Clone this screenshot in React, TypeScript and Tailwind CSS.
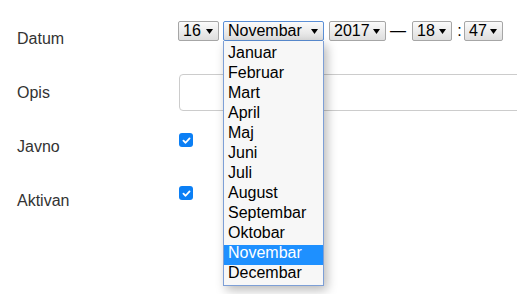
const months = [
  'Januar',
  'Februar',
  'Mart',
  'April',
  'Maj',
  'Juni',
  'Juli',
  'August',
  'Septembar',
  'Oktobar',
  'Novembar',
  'Decembar',
];

function Caret() {
  return (
    <svg className="h-[5px] w-[7px] flex-shrink-0" viewBox="0 0 7 5">
      <path d="M0 0h7L3.5 5z" fill="#000" />
    </svg>
  );
}

function FakeSelect({
  value,
  width,
  focused,
}: {
  value: string;
  width: string;
  focused?: boolean;
}) {
  return (
    <div
      className={`flex h-[20px] items-center justify-between rounded-[2px] border pl-[4px] pr-[5px] bg-gradient-to-b from-[#fbfbfb] to-[#dedede] ${width} ${
        focused ? 'border-[#5b8fd6]' : 'border-[#a6a6a6]'
      }`}
    >
      <span className="text-[16px] leading-none text-black">{value}</span>
      <Caret />
    </div>
  );
}

function Checkbox() {
  return (
    <span className="flex h-[14px] w-[14px] items-center justify-center rounded-[3px] bg-[#0b7ff5]">
      <svg className="h-[9px] w-[9px]" viewBox="0 0 10 10" fill="none">
        <path d="M1.6 5.2l2.4 2.3L8.4 2.6" stroke="#fff" strokeWidth={2} strokeLinecap="round" strokeLinejoin="round" />
      </svg>
    </span>
  );
}

export default function App() {
  return (
    <div className="relative h-[294px] w-[517px] overflow-hidden bg-white pt-[11px] font-['Liberation_Sans',Arial,sans-serif] text-[16px] text-[#333]">
      {/* Datum */}
      <div className="flex h-[54px]">
        <div className="flex w-[178px] shrink-0 items-center pl-[17px] pt-[1px]">Datum</div>
        <div className="mt-[10px] flex h-[20px] items-center">
          <FakeSelect value="16" width="w-[41px]" />
          <div className="relative ml-[4px]">
            <FakeSelect value="Novembar" width="w-[101px]" focused />
            {/* open month list */}
            <ul className="absolute left-0 top-[20px] z-10 w-[101px] border border-t-0 border-[#7d9fd6] bg-[#f7f7f7] pt-[4px] shadow-[3px_4px_10px_rgba(0,0,0,0.28)]">
              {months.map((m) => (
                <li
                  key={m}
                  className={`h-[20px] pl-[4px] text-[16px] leading-[16px] ${
                    m === 'Novembar' ? 'bg-[#1e90ff] text-white' : 'text-black'
                  }`}
                >
                  {m}
                </li>
              ))}
            </ul>
          </div>
          <div className="ml-[5px]">
            <FakeSelect value="2017" width="w-[57px]" />
          </div>
          <span className="ml-[4px] w-[15px] text-center text-black">—</span>
          <div className="ml-[7px]">
            <FakeSelect value="18" width="w-[40px]" />
          </div>
          <span className="ml-[3px] w-[9px] text-center text-black">:</span>
          <div>
            <FakeSelect value="47" width="w-[39px]" />
          </div>
        </div>
      </div>

      {/* Opis */}
      <div className="flex h-[54px]">
        <div className="flex w-[178px] shrink-0 items-center pl-[17px] pt-[1px]">Opis</div>
        <div className="ml-[1px] mt-[9px] h-[37px] w-[360px] shrink-0 rounded-[4px] border border-[#cccccc] bg-white" />
      </div>

      {/* Javno */}
      <div className="flex h-[54px]">
        <div className="flex w-[178px] shrink-0 items-center pl-[17px] pt-[1px]">Javno</div>
        <div className="ml-[1px] mt-[14px]">
          <Checkbox />
        </div>
      </div>

      {/* Aktivan */}
      <div className="flex h-[54px]">
        <div className="flex w-[178px] shrink-0 items-center pl-[17px] pt-[1px]">Aktivan</div>
        <div className="ml-[1px] mt-[13px]">
          <Checkbox />
        </div>
      </div>
    </div>
  );
}
